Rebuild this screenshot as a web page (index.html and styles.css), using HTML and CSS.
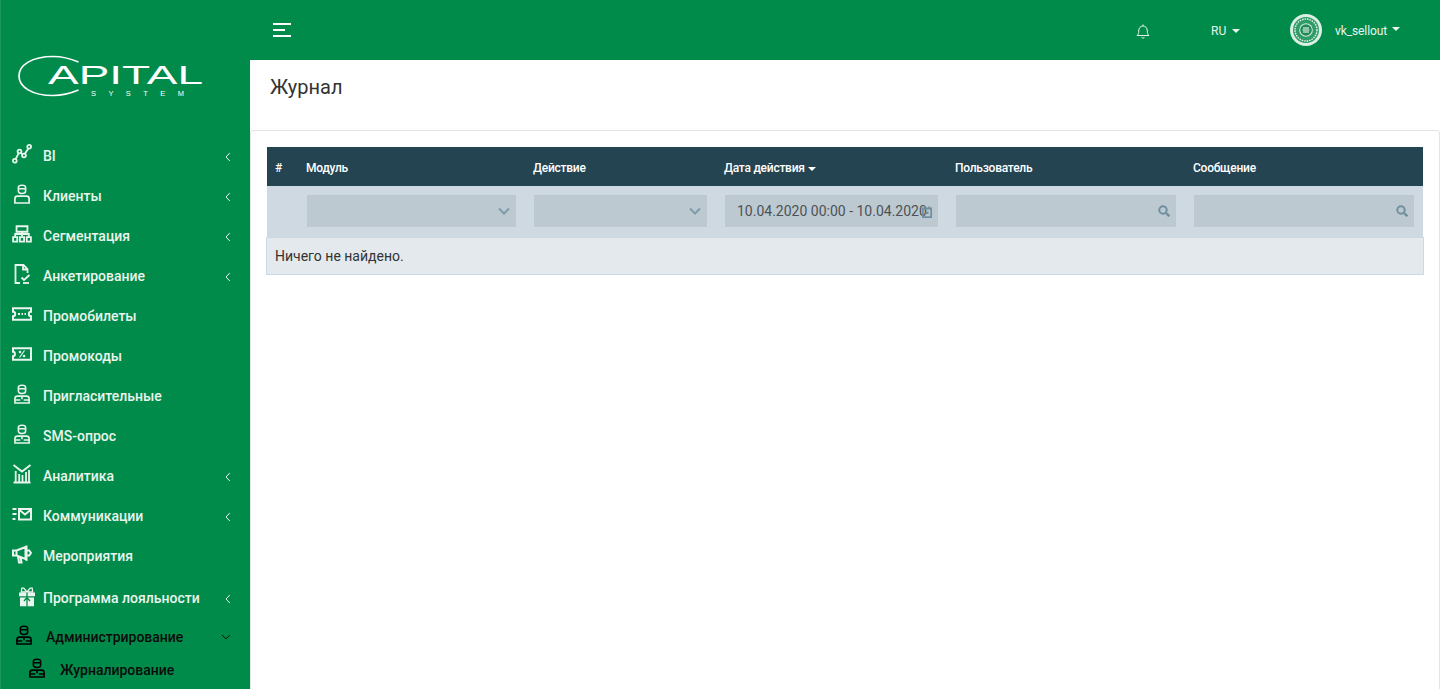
FILE: index.html
```html
<!DOCTYPE html>
<html lang="ru">
<head>
<meta charset="utf-8">
<title>Журнал</title>
<link rel="stylesheet" href="styles.css">
</head>
<body>
<svg class="defs" width="0" height="0" aria-hidden="true">
  <defs>
    <symbol id="i-person" viewBox="0 0 20 20">
      <path d="M6.400 3.300c0-2.800 7.200-2.800 7.200 0v4c0 3-7.200 3-7.200 0zM6.400 4.700h7.200" fill="none" stroke="currentColor" stroke-width="1.600"/>
      <path d="M2.900 19v-4.300c0-1.600 1-2.600 2.600-2.600h9c1.600 0 2.600 1 2.600 2.600V19z" fill="none" stroke="currentColor" stroke-width="1.700"/>
    </symbol>
    <symbol id="i-person-tie" viewBox="0 0 20 20">
      <path d="M6.400 3.300c0-2.800 7.200-2.800 7.200 0v4c0 3-7.200 3-7.200 0zM6.400 4.700h7.200" fill="none" stroke="currentColor" stroke-width="1.600"/>
      <path d="M2.900 19v-4.300c0-1.600 1-2.600 2.600-2.600h9c1.600 0 2.600 1 2.600 2.600V19zM2.900 16h5.400M11.700 16h5.400M10 12.500v2.800" fill="none" stroke="currentColor" stroke-width="1.600"/>
    </symbol>
    <symbol id="i-chev" viewBox="0 0 8 10">
      <path d="M5.800 1 2 5l3.800 4" fill="none" stroke="currentColor" stroke-width="1"/>
    </symbol>
  </defs>
</svg>
<div class="app">
  <aside class="sidebar">
    <div class="logo">
      <svg width="186" height="44" viewBox="0 0 186 44" aria-label="Capital System">
        <path d="M61.500 7C52 3 45 1.500 36 1.500 15 1.500 2 10 2 21s13 19.500 34 19.500c9 0 16-1.500 25.500-5.500" fill="none" stroke="#fff" stroke-width="1.700"/>
        <text class="logo-main" x="31" y="29" textLength="155" lengthAdjust="spacingAndGlyphs">APITAL</text>
        <text class="logo-sub" x="74" y="41" textLength="93">SYSTEM</text>
      </svg>
    </div>
    <nav class="menu">
      <a class="item">
        <svg class="ico" viewBox="0 0 20 20"><g fill="none" stroke="currentColor" stroke-width="1.800"><circle cx="2.800" cy="16.800" r="1.900"/><circle cx="7.500" cy="7.500" r="1.900"/><circle cx="12" cy="11.500" r="1.900"/><circle cx="17.200" cy="2.800" r="1.900"/><path d="m3.600 15.100 3.100-5.900M8.900 8.800l1.700 1.500M12.900 9.800l3.400-5.400"/></g></svg>
        <span class="label">BI</span><svg class="chev"><use href="#i-chev"/></svg>
      </a>
      <a class="item"><svg class="ico"><use href="#i-person"/></svg><span class="label">Клиенты</span><svg class="chev"><use href="#i-chev"/></svg></a>
      <a class="item">
        <svg class="ico" viewBox="0 0 22 20"><g fill="none" stroke="currentColor" stroke-width="2"><path d="M5 1.500h12v6H5zM11 7.500v5M3.500 13v-3h15v3"/><path d="M1.200 13.500h4.600v4.800H1.200zM8.700 13.500h4.600v4.800H8.700zM16.200 13.500h4.600v4.800h-4.600z"/></g></svg>
        <span class="label">Сегментация</span><svg class="chev"><use href="#i-chev"/></svg>
      </a>
      <a class="item">
        <svg class="ico" viewBox="0 0 20 20"><g fill="none" stroke="currentColor" stroke-width="1.800"><path d="M15.500 9V5l-4-4H3.500v18H8M11 1v4.500h4.500"/><path d="m9.500 13.500 2.500 2.500 5.500-5"/><path d="M11 19h6"/></g></svg>
        <span class="label">Анкетирование</span><svg class="chev"><use href="#i-chev"/></svg>
      </a>
      <a class="item">
        <svg class="ico" viewBox="0 0 20 14"><g fill="none" stroke="currentColor" stroke-width="2"><path d="M1 1.300h18v3.500c-1.400 0-2.200 1-2.200 2.200s.8 2.200 2.200 2.200v3.500H1V9.200c1.400 0 2.200-1 2.200-2.200S2.400 4.800 1 4.800z"/><path d="M6 7h2M9.500 7h1.500M12.500 7H14"/></g></svg>
        <span class="label">Промобилеты</span>
      </a>
      <a class="item">
        <svg class="ico" viewBox="0 0 20 14"><path d="M1 1.300h18v11.400H1V9.200c1.400 0 1.900-1 1.900-2.200S2.400 4.800 1 4.800z" fill="none" stroke="currentColor" stroke-width="2"/><path d="m7.500 10.500 5-7" stroke="currentColor" stroke-width="1.200"/><circle cx="8" cy="5" r="1.300" fill="currentColor"/><circle cx="12" cy="9" r="1.300" fill="currentColor"/></svg>
        <span class="label">Промокоды</span>
      </a>
      <a class="item"><svg class="ico"><use href="#i-person-tie"/></svg><span class="label">Пригласительные</span></a>
      <a class="item"><svg class="ico"><use href="#i-person-tie"/></svg><span class="label">SMS-опрос</span></a>
      <a class="item">
        <svg class="ico" viewBox="0 0 20 20"><g fill="none" stroke="currentColor" stroke-width="1.800"><path d="m1.500 1 4.500 3.500 4 3 4-3 4.500-3.500M1.500 18.500h17M3.700 18.500V7M7.200 18.500V10M10.500 18.500V11M14 18.500V8M17 18.500V6"/></g></svg>
        <span class="label">Аналитика</span><svg class="chev"><use href="#i-chev"/></svg>
      </a>
      <a class="item">
        <svg class="ico" viewBox="0 0 20 14"><g fill="none" stroke="currentColor" stroke-width="2"><path d="M7 2h12v10.500H7zM7.500 3 13 7.500 18.500 3"/><path d="M.5 2h4M.5 7h4M.5 12h3"/></g></svg>
        <span class="label">Коммуникации</span><svg class="chev"><use href="#i-chev"/></svg>
      </a>
      <a class="item">
        <svg class="ico" viewBox="0 0 20 20"><g fill="none" stroke="currentColor" stroke-width="2"><path d="M1 6.500h3.500v5H1zM4.500 6.500l9-3.500v12l-9-3.500M14.500 1.500v15.500M14.500 6.500h2.700l1.800 2.500-1.800 2.500h-2.700M6 12l1 6.500h2.500l-1-5.500"/></g></svg>
        <span class="label">Мероприятия</span>
      </a>
      <a class="item item-gift">
        <svg class="ico" viewBox="0 0 20 20"><path d="M2 5.500h16v3.700H2zM3 10.500h14v8.800H3z" fill="currentColor"/><path d="M10 5 6.800 1.200H4.800L4.300 5zM10 5l3.200-3.800h2l.5 3.800z" stroke="currentColor" fill="none" stroke-width="1.300"/><path d="M10 5.500v14M7 14l3-3.500 3 3.500" stroke="#018b4a" stroke-width="1.300" fill="none"/></svg>
        <span class="label">Программа лояльности</span><svg class="chev"><use href="#i-chev"/></svg>
      </a>
      <a class="item item-open">
        <svg class="ico"><use href="#i-person-tie"/></svg><span class="label">Администрирование</span>
        <svg class="chev-down" viewBox="0 0 10 8"><path d="m1 2 4 3.800L9 2" fill="none" stroke="currentColor" stroke-width="1"/></svg>
      </a>
      <a class="item item-sub"><svg class="ico"><use href="#i-person-tie"/></svg><span class="label">Журналирование</span></a>
    </nav>
  </aside>
  <div class="main">
    <header class="topbar">
      <svg class="burger" width="18" height="14" viewBox="0 0 18 14"><path d="M0 1h18M0 7h12M0 13h18" stroke="#fff" stroke-width="2"/></svg>
      <svg class="bell" width="14" height="15" viewBox="0 0 14 15"><path d="M1 11.500c1.200-1 1.700-2.200 1.700-4.500 0-3 1.800-5 4.300-5s4.300 2 4.300 5c0 2.300.5 3.500 1.700 4.500zM5.500 13.300c.4 1 2.600 1 3 0M7 .5V2" fill="none" stroke="#e6f3ec" stroke-width="1"/></svg>
      <div class="lang"><span>RU</span><i class="caret"></i></div>
      <div class="user">
        <svg class="avatar" width="32" height="32" viewBox="0 0 32 32"><circle cx="16" cy="16" r="16" fill="#dcefe4"/><circle cx="16" cy="16" r="13" fill="#2f9b66"/><circle cx="16" cy="16" r="11" fill="none" stroke="#e8f4ee" stroke-width="1.400" stroke-dasharray="1.500 1"/><circle cx="16" cy="16" r="6.800" fill="#d5ebdf"/><circle cx="16" cy="16" r="5.800" fill="#1f8a55"/><path d="M13 14h6M12.500 16h7M13 18h6" stroke="#fff" stroke-width="1"/></svg>
        <span class="uname">vk_sellout</span><i class="caret caret-user"></i>
      </div>
    </header>
    <div class="title"><h1>Журнал</h1></div>
    <section class="card">
      <div class="grid">
        <div class="head">
          <div>#</div><div>Модуль</div><div>Действие</div><div>Дата действия<i class="caret caret-sort"></i></div><div>Пользователь</div><div>Сообщение</div>
        </div>
        <div class="filters">
          <div></div>
          <div><div class="field"><svg class="f-ico" width="12" height="8" viewBox="0 0 12 8"><path d="m1 1.500 5 5 5-5" fill="none" stroke="#7f9ba9" stroke-width="2"/></svg></div></div>
          <div><div class="field"><svg class="f-ico" width="12" height="8" viewBox="0 0 12 8"><path d="m1 1.500 5 5 5-5" fill="none" stroke="#7f9ba9" stroke-width="2"/></svg></div></div>
          <div><div class="field field-date"><span>10.04.2020 00:00 - 10.04.2020</span><svg class="cal" width="10" height="12" viewBox="0 0 10 12"><path d="M.8 2.500h8.400v8.700H.8zM2.800.5v2M7.200.5v2" fill="none" stroke="#6f8f9e" stroke-width="1.800"/><path d="M3.500 5.500h3v2.500h-3z" fill="#6f8f9e"/></svg></div></div>
          <div><div class="field"><svg class="f-ico" width="12" height="12" viewBox="0 0 12 12"><circle cx="5" cy="5" r="3.700" fill="none" stroke="#6f8f9e" stroke-width="2"/><path d="m8 8 3.300 3.300" stroke="#6f8f9e" stroke-width="2.400"/></svg></div></div>
          <div><div class="field"><svg class="f-ico" width="12" height="12" viewBox="0 0 12 12"><circle cx="5" cy="5" r="3.700" fill="none" stroke="#6f8f9e" stroke-width="2"/><path d="m8 8 3.300 3.300" stroke="#6f8f9e" stroke-width="2.400"/></svg></div></div>
        </div>
        <div class="empty">Ничего не найдено.</div>
      </div>
    </section>
  </div>
</div>
</body>
</html>
```
FILE: styles.css
```css
* { box-sizing: border-box; }
html, body { margin: 0; height: 100%; overflow: hidden; }
body { font-family: Roboto, "Liberation Sans", sans-serif; font-size: 14px; color: #333; background: #fff; }
.defs { position: absolute; }
.app { display: flex; height: 689px; }

.sidebar { width: 250px; flex: none; background: #018b4a; color: #e9f5ee; border-left: 1px solid #19975c; overflow: hidden; }
.logo { height: 136px; padding: 55px 0 0 16px; }
.logo svg { display: block; overflow: visible; }
.logo-main { font-family: "Liberation Sans", sans-serif; font-size: 25px; fill: #fff; }
.logo-sub { font-family: "Liberation Sans", sans-serif; font-size: 7.500px; fill: #fff; }

.menu { display: flex; flex-direction: column; }
.item { display: flex; align-items: center; height: 40px; padding-left: 11px; font-weight: 500; font-size: 14px; }
.ico { width: 20px; height: 20px; flex: none; margin: 0 11px 5px 0; color: #e9f5ee; }
.label { flex: 1; }
.chev { width: 8px; height: 10px; flex: none; margin-right: 18px; margin-top: 2px; }
.chev-down { width: 10px; height: 8px; flex: none; margin-right: 19px; }
.item-gift { margin-top: 2px; }
.item-gift .ico { margin: 0 6px 3px 5px; }
.item-open { height: 38px; color: #0b0b0b; }
.item-open .ico { color: #000; margin-left: 2px; margin-right: 12px; }
.item-sub { height: 28px; padding-left: 26px; color: #0b0b0b; }
.item-sub .ico { color: #000; margin-right: 13px; }

.main { flex: 1; min-width: 0; display: flex; flex-direction: column; }
.topbar { height: 60px; flex: none; background: #018b4a; display: flex; align-items: center; padding-left: 23px; color: #e9f5ee; font-size: 12px; }
.burger { margin-right: auto; }
.bell { margin-right: 61px; margin-top: 2px; }
.lang { display: flex; align-items: center; width: 79px; margin-top: 2px; }
.caret { display: inline-block; width: 0; height: 0; border-left: 4px solid transparent; border-right: 4px solid transparent; border-top: 4px solid #e9f5ee; margin-left: 6px; }
.user { display: flex; align-items: center; width: 150px; }
.avatar { flex: none; margin-right: 13px; }
.uname { margin-top: 2px; letter-spacing: -0.1px; }
.caret-user { margin-left: 5px; margin-top: -3px; }

.title { height: 70px; flex: none; padding: 15px 20px 0; }
.title h1 { margin: 0; font-size: 20px; font-weight: 400; line-height: 25px; color: #333; }

.card { flex: 1; border: 1px solid #e2e4e6; border-bottom: 0; border-radius: 4px 4px 0 0; padding: 16px 15px 0 16px; }
.grid { width: 1156px; }
.head, .filters { display: grid; grid-template-columns: 31px 227px 191px 231px 238px 238px; }
.head { height: 39px; background: #244452; color: #fff; font-size: 12px; font-weight: 500; letter-spacing: -0.25px; align-items: center; padding-top: 2px; }
.head > div { padding-left: 8px; }
.caret-sort { border-top-color: #fff; margin-left: 3px; vertical-align: 1px; }
.filters { height: 51px; background: #cfd9e1; align-items: start; padding-top: 9px; }
.filters > div { padding: 0 9px; }
.field { height: 32px; background: #bdc9d1; display: flex; align-items: center; justify-content: flex-end; padding-right: 6px; position: relative; }
.f-ico { display: block; }
.field-date { justify-content: flex-start; padding-left: 12px; padding-right: 0; color: #4c5257; font-size: 14px; white-space: nowrap; }
.cal { position: absolute; right: 6px; top: 11px; }
.empty { height: 38px; margin: 0 -1px; background: #e4e9ed; border: 1px solid #cfd9e1; display: flex; align-items: center; padding-left: 8px; font-size: 14px; color: #333; }
```
